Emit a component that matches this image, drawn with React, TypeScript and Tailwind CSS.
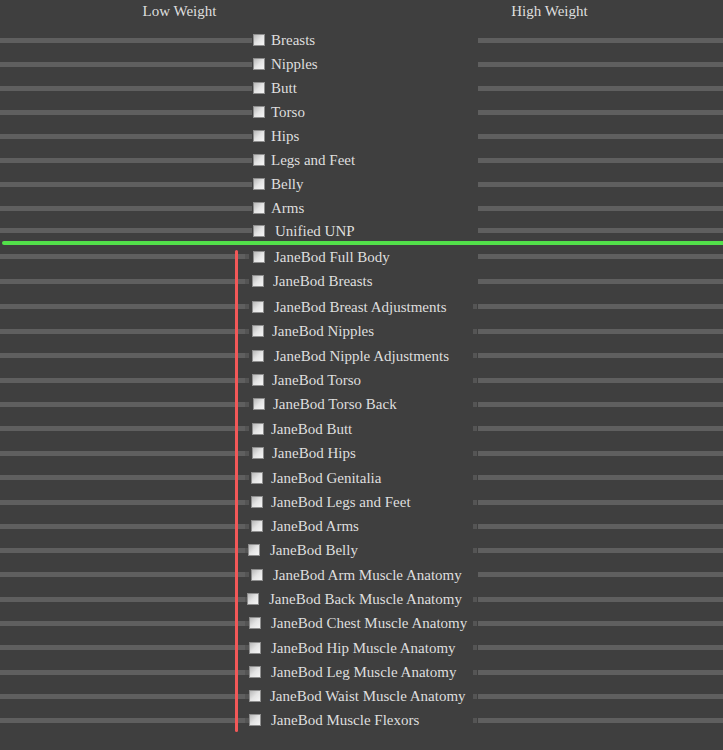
const upperRows = [
  { label: "Breasts", lm: "ml-[6px]" },
  { label: "Nipples", lm: "ml-[6px]" },
  { label: "Butt", lm: "ml-[6px]" },
  { label: "Torso", lm: "ml-[6px]" },
  { label: "Hips", lm: "ml-[6px]" },
  { label: "Legs and Feet", lm: "ml-[6px]" },
  { label: "Belly", lm: "ml-[6px]" },
  { label: "Arms", lm: "ml-[6px]" },
  { label: "Unified UNP", lm: "ml-[10px]" },
];

const lowerRows = [
  { label: "JaneBod Full Body", h: "h-[23px]", cm: "ml-[4px]", lm: "ml-[9px]", stub: false },
  { label: "JaneBod Breasts", h: "h-[26px]", cm: "ml-[3px]", lm: "ml-[9px]", stub: false },
  { label: "JaneBod Breast Adjustments", h: "h-[25px]", cm: "ml-[3px]", lm: "ml-[10px]", stub: true },
  { label: "JaneBod Nipples", h: "h-6", cm: "ml-[3px]", lm: "ml-[8px]", stub: true },
  { label: "JaneBod Nipple Adjustments", h: "h-[25px]", cm: "ml-[3px]", lm: "ml-[10px]", stub: true },
  { label: "JaneBod Torso", h: "h-6", cm: "ml-[3px]", lm: "ml-[8px]", stub: true },
  { label: "JaneBod Torso Back", h: "h-6", cm: "ml-[4px]", lm: "ml-[8px]", stub: true },
  { label: "JaneBod Butt", h: "h-[25px]", cm: "ml-[3px]", lm: "ml-[7px]", stub: true },
  { label: "JaneBod Hips", h: "h-6", cm: "ml-[3px]", lm: "ml-[8px]", stub: true },
  { label: "JaneBod Genitalia", h: "h-[25px]", cm: "ml-[2px]", lm: "ml-[8px]", stub: true },
  { label: "JaneBod Legs and Feet", h: "h-6", cm: "ml-[2px]", lm: "ml-[8px]", stub: true },
  { label: "JaneBod Arms", h: "h-6", cm: "ml-[2px]", lm: "ml-[8px]", stub: true },
  { label: "JaneBod Belly", h: "h-6", cm: "-ml-[1px]", lm: "ml-[10px]", stub: true },
  { label: "JaneBod Arm Muscle Anatomy", h: "h-[25px]", cm: "ml-[2px]", lm: "ml-[10px]", stub: false },
  { label: "JaneBod Back Muscle Anatomy", h: "h-6", cm: "-ml-[2px]", lm: "ml-[10px]", stub: true },
  { label: "JaneBod Chest Muscle Anatomy", h: "h-6", cm: "ml-0", lm: "ml-[10px]", stub: true },
  { label: "JaneBod Hip Muscle Anatomy", h: "h-[25px]", cm: "ml-0", lm: "ml-[10px]", stub: true },
  { label: "JaneBod Leg Muscle Anatomy", h: "h-6", cm: "ml-0", lm: "ml-[10px]", stub: true },
  { label: "JaneBod Waist Muscle Anatomy", h: "h-6", cm: "ml-0", lm: "ml-[9px]", stub: true },
  { label: "JaneBod Muscle Flexors", h: "h-6", cm: "ml-0", lm: "ml-[10px]", stub: true },
];

const Box = ({ className }: { className: string }) => (
  <span
    className={`relative block w-3 h-3 shrink-0 border border-[#8e8e8e] bg-linear-to-br from-[#b9b9b9] via-[#e4e4e4] to-[#f6f6f6] ${className}`}
  />
);

const Label = ({ text, className }: { text: string; className: string }) => (
  <span className={`relative whitespace-nowrap text-[15px] leading-[18px] text-[#dedede] ${className}`}>
    {text}
  </span>
);

export default function App() {
  return (
    <div
      className="relative h-[750px] w-full overflow-hidden bg-[#3f3f3f]"
      style={{ fontFamily: '"Liberation Serif", "Times New Roman", serif' }}
    >
      <div className="flex h-7 items-start pt-[1px] text-[15px] leading-[20px] text-[#dedede]">
        <div className="w-[359px] text-center">Low Weight</div>
        <div className="ml-[17px] w-[347px] text-center">High Weight</div>
      </div>

      {upperRows.map((r, i) => (
        <div
          key={r.label}
          className={`flex items-center ${i === upperRows.length - 1 ? "h-[21px]" : "h-6"}`}
        >
          <div className="flex w-[473px] shrink-0 items-center">
            <div className="h-[5px] w-[252px] shrink-0 bg-[#5f5f5f]" />
            <Box className="ml-px" />
            <Label text={r.label} className={r.lm} />
          </div>
          <div className="flex flex-1 items-center pl-[5px]">
            <div className="h-[5px] flex-1 bg-[#5f5f5f]" />
          </div>
        </div>
      ))}

      <div className="ml-[2px] h-1 rounded-l-full bg-[#52e04a]" />

      {lowerRows.map((r) => (
        <div key={r.label} className={`flex items-center ${r.h}`}>
          <div className="flex w-[473px] shrink-0 items-center">
            <div className="h-[5px] w-[245px] shrink-0 bg-[#5f5f5f]" />
            <div className="h-[5px] w-[4px] shrink-0 bg-[#545454]" />
            <Box className={r.cm} />
            <Label text={r.label} className={r.lm} />
          </div>
          <div className="flex flex-1 items-center">
            <div className={`h-[5px] w-[4px] shrink-0 ${r.stub ? "bg-[#555555]" : "bg-transparent"}`} />
            <div className="ml-px h-[5px] flex-1 bg-[#5f5f5f]" />
          </div>
        </div>
      ))}

      <div className="absolute left-[235px] top-[250px] h-[482px] w-[3px] rounded-full bg-[#f25858]" />
    </div>
  );
}
